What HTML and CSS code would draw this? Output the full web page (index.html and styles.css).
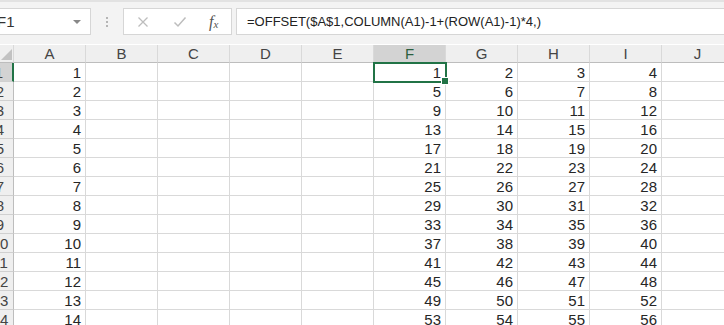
FILE: index.html
```html
<!DOCTYPE html>
<html lang="zh">
<head>
  <meta charset="UTF-8" />
  <title>OFFSET</title>
  <link rel="stylesheet" href="styles.css">
</head>
<body>

<!-- Barre de formule -->
<div class="formula-bar">
  <div class="name-box">
    <span class="name-text">F1</span>
    <span class="dropdown"></span>
  </div>
  <div class="grip"><i></i><i></i><i></i></div>
  <div class="fx-buttons">
    <svg class="btn-icon" width="12" height="12" viewBox="0 0 12 12">
      <path d="M1.5 1.5 L10.5 10.5 M10.5 1.5 L1.5 10.5" stroke="#bdbdbd" stroke-width="1.3" fill="none"/>
    </svg>
    <svg class="btn-icon" width="14" height="12" viewBox="0 0 14 12">
      <path d="M1.5 6.5 L5 10 L12.5 1.5" stroke="#bdbdbd" stroke-width="1.5" fill="none"/>
    </svg>
    <span class="fx">f<sub>x</sub></span>
  </div>
  <div class="formula-input">=OFFSET($A$1,COLUMN(A1)-1+(ROW(A1)-1)*4,)</div>
</div>

<!-- Feuille -->
<div class="sheet">
  <div class="row head">
    <div class="corner"><span class="tri"></span></div>
    <div class="col">A</div><div class="col">B</div><div class="col">C</div><div class="col">D</div><div class="col">E</div>
    <div class="col active">F</div><div class="col">G</div><div class="col">H</div><div class="col">I</div><div class="col">J</div>
  </div>

  <div class="row"><div class="rh active"><span>1</span></div><div class="c">1</div><div class="c"></div><div class="c"></div><div class="c"></div><div class="c"></div><div class="c selected">1<i class="handle"></i></div><div class="c">2</div><div class="c">3</div><div class="c">4</div><div class="c"></div></div>
  <div class="row"><div class="rh"><span>2</span></div><div class="c">2</div><div class="c"></div><div class="c"></div><div class="c"></div><div class="c"></div><div class="c">5</div><div class="c">6</div><div class="c">7</div><div class="c">8</div><div class="c"></div></div>
  <div class="row"><div class="rh"><span>3</span></div><div class="c">3</div><div class="c"></div><div class="c"></div><div class="c"></div><div class="c"></div><div class="c">9</div><div class="c">10</div><div class="c">11</div><div class="c">12</div><div class="c"></div></div>
  <div class="row"><div class="rh"><span>4</span></div><div class="c">4</div><div class="c"></div><div class="c"></div><div class="c"></div><div class="c"></div><div class="c">13</div><div class="c">14</div><div class="c">15</div><div class="c">16</div><div class="c"></div></div>
  <div class="row"><div class="rh"><span>5</span></div><div class="c">5</div><div class="c"></div><div class="c"></div><div class="c"></div><div class="c"></div><div class="c">17</div><div class="c">18</div><div class="c">19</div><div class="c">20</div><div class="c"></div></div>
  <div class="row"><div class="rh"><span>6</span></div><div class="c">6</div><div class="c"></div><div class="c"></div><div class="c"></div><div class="c"></div><div class="c">21</div><div class="c">22</div><div class="c">23</div><div class="c">24</div><div class="c"></div></div>
  <div class="row"><div class="rh"><span>7</span></div><div class="c">7</div><div class="c"></div><div class="c"></div><div class="c"></div><div class="c"></div><div class="c">25</div><div class="c">26</div><div class="c">27</div><div class="c">28</div><div class="c"></div></div>
  <div class="row"><div class="rh"><span>8</span></div><div class="c">8</div><div class="c"></div><div class="c"></div><div class="c"></div><div class="c"></div><div class="c">29</div><div class="c">30</div><div class="c">31</div><div class="c">32</div><div class="c"></div></div>
  <div class="row"><div class="rh"><span>9</span></div><div class="c">9</div><div class="c"></div><div class="c"></div><div class="c"></div><div class="c"></div><div class="c">33</div><div class="c">34</div><div class="c">35</div><div class="c">36</div><div class="c"></div></div>
  <div class="row"><div class="rh"><span>10</span></div><div class="c">10</div><div class="c"></div><div class="c"></div><div class="c"></div><div class="c"></div><div class="c">37</div><div class="c">38</div><div class="c">39</div><div class="c">40</div><div class="c"></div></div>
  <div class="row"><div class="rh"><span>11</span></div><div class="c">11</div><div class="c"></div><div class="c"></div><div class="c"></div><div class="c"></div><div class="c">41</div><div class="c">42</div><div class="c">43</div><div class="c">44</div><div class="c"></div></div>
  <div class="row"><div class="rh"><span>12</span></div><div class="c">12</div><div class="c"></div><div class="c"></div><div class="c"></div><div class="c"></div><div class="c">45</div><div class="c">46</div><div class="c">47</div><div class="c">48</div><div class="c"></div></div>
  <div class="row"><div class="rh"><span>13</span></div><div class="c">13</div><div class="c"></div><div class="c"></div><div class="c"></div><div class="c"></div><div class="c">49</div><div class="c">50</div><div class="c">51</div><div class="c">52</div><div class="c"></div></div>
  <div class="row"><div class="rh"><span>14</span></div><div class="c">14</div><div class="c"></div><div class="c"></div><div class="c"></div><div class="c"></div><div class="c">53</div><div class="c">54</div><div class="c">55</div><div class="c">56</div><div class="c"></div></div>
</div>

</body>
</html>
```

FILE: styles.css
```css
body {
  margin: 0;
  background: #fff;
  font-family: "Liberation Sans", Arial, sans-serif;
  color: #262626;
  overflow: hidden;
}

/* Barre de formule */
.formula-bar {
  height: 44px;
  background: #f3f3f3;
  border-top: 2px solid #e2e2e2;
  box-sizing: border-box;
  display: flex;
  align-items: flex-start;
  padding-top: 6px;
}
.name-box {
  width: 100px;
  height: 27px;
  margin-left: -9px;
  background: #fff;
  border: 1px solid #d6d6d6;
  box-sizing: border-box;
  display: flex;
  align-items: center;
  justify-content: space-between;
  padding: 0 9px 0 5px;
  font-size: 15px;
  color: #333;
}
.dropdown {
  width: 0;
  height: 0;
  border-left: 4px solid transparent;
  border-right: 4px solid transparent;
  border-top: 4px solid #888;
}
.grip {
  width: 32px;
  height: 27px;
  display: flex;
  flex-direction: column;
  align-items: center;
  justify-content: center;
  gap: 2px;
}
.grip i {
  width: 2px;
  height: 2px;
  background: #b5b5b5;
}
.fx-buttons {
  width: 109px;
  height: 27px;
  background: #fff;
  border: 1px solid #d6d6d6;
  box-sizing: border-box;
  display: flex;
  align-items: center;
  padding-left: 13px;
}
.btn-icon {
  margin-right: 24px;
}
.btn-icon + .btn-icon {
  margin-right: 22px;
}
.fx {
  font-family: "Liberation Serif", serif;
  font-style: italic;
  font-size: 16px;
  color: #555;
}
.fx sub {
  font-size: 11px;
  vertical-align: -1px;
}
.formula-input {
  flex: 1;
  height: 27px;
  margin-left: 4px;
  background: #fff;
  border: 1px solid #d6d6d6;
  border-right: none;
  box-sizing: border-box;
  padding-left: 10px;
  font-size: 13px;
  line-height: 25px;
  color: #222;
}

/* Feuille */
.sheet {
  margin-top: 1px;
  width: 724px;
  overflow: hidden;
}
.row {
  display: flex;
  height: 19px;
}
.row.head {
  height: 18px;
}
.row > div {
  flex-shrink: 0;
  box-sizing: border-box;
  border-right: 1px solid #d9d9d9;
  border-bottom: 1px solid #d9d9d9;
}
.corner,
.rh {
  width: 14px;
  background: #efefef;
}
.corner {
  position: relative;
  border-bottom-color: #bdbdbd !important;
}
.tri {
  position: absolute;
  right: 1px;
  bottom: 2px;
  width: 0;
  height: 0;
  border-left: 11px solid transparent;
  border-bottom: 11px solid #c2c2c2;
}
.col {
  width: 72px;
  background: #efefef;
  border-bottom-color: #bdbdbd !important;
  text-align: center;
  font-size: 15px;
  line-height: 18px;
  color: #444;
}
.col.active {
  background: #d3d3d3;
  color: #2b5f3f;
}
.rh {
  display: flex;
  justify-content: flex-end;
  overflow: hidden;
  border-right-color: #bdbdbd !important;
  border-bottom-color: #d0d0d0 !important;
}
.rh span {
  flex-shrink: 0;
  width: 26px;
  text-align: center;
  font-size: 15px;
  line-height: 19px;
  color: #444;
}
.rh.active {
  background: #d3d3d3;
  border-right: 2px solid #217346 !important;
}
.c {
  width: 72px;
  text-align: right;
  padding-right: 4px;
  font-size: 15px;
  line-height: 20px;
}
.c.selected {
  position: relative;
  outline: 2px solid #217346;
  outline-offset: -1px;
}
.handle {
  position: absolute;
  right: -4px;
  bottom: -4px;
  width: 6px;
  height: 6px;
  background: #217346;
  border: 1px solid #fff;
}
```
